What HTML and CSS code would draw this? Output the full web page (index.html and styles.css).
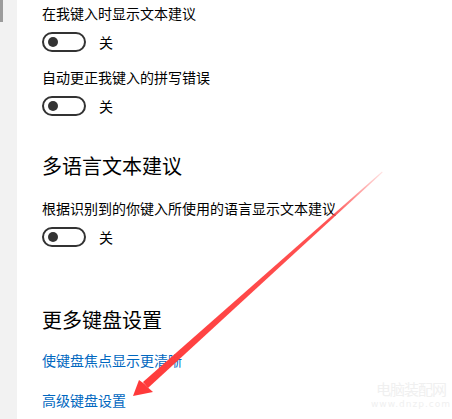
FILE: index.html
```
<html>
<head>
    <title>键盘设置</title>
    <meta http-equiv="content-type" content="text/html; charset=UTF-8">
    <link rel="stylesheet" href="styles.css">
</head>
<body>
    <div id="page">
        <div class="sidebar">
            <div class="thumb"></div>
        </div>

        <div id="content">
            <div class="setting first">
                <div class="label">在我键入时显示文本建议</div>
                <div class="switch-row">
                    <span class="toggle"><span class="knob"></span></span>
                    <span class="state">关</span>
                </div>
            </div>

            <div class="setting">
                <div class="label">自动更正我键入的拼写错误</div>
                <div class="switch-row">
                    <span class="toggle"><span class="knob"></span></span>
                    <span class="state">关</span>
                </div>
            </div>

            <h2 class="section">多语言文本建议</h2>
            <div class="setting tight">
                <div class="label">根据识别到的你键入所使用的语言显示文本建议</div>
                <div class="switch-row">
                    <span class="toggle"><span class="knob"></span></span>
                    <span class="state">关</span>
                </div>
            </div>

            <h2 class="section more">更多键盘设置</h2>
            <a class="link" href="#">使键盘焦点显示更清晰</a>
            <a class="link last" href="#">高级键盘设置</a>
        </div>

        <!-- red arrow drawn over the page -->
        <svg class="arrow" width="452" height="419" viewBox="0 0 452 419">
            <defs>
                <linearGradient id="fade" x1="382" y1="172" x2="133" y2="396" gradientUnits="userSpaceOnUse">
                    <stop offset="0" stop-color="#ff4040" stop-opacity="0.15"/>
                    <stop offset="0.2" stop-color="#ff4040" stop-opacity="0.9"/>
                    <stop offset="1" stop-color="#ff3a3a"/>
                </linearGradient>
            </defs>
            <polygon points="382,171.6 382.6,172.4 148,388 143,382" fill="url(#fade)"/>
            <polygon points="133,396 139,380 144.5,384 148.5,388 153,392" fill="#ff3a3a"/>
        </svg>

        <div class="watermark">
            <div class="wm-name">电脑装配网</div>
            <div class="wm-url">www.dnzp.com</div>
        </div>
    </div>
</body>
</html>
```

FILE: styles.css
```
body {
    margin: 0;
    background: #fff;
    font-family: "Noto Sans CJK SC", "Noto Sans", sans-serif;
    color: #000;
}

#page {
    position: relative;
    display: flex;
    width: 452px;
    height: 419px;
    overflow: hidden;
}

.sidebar {
    width: 17px;
    background: #f2f2f2;
    flex-shrink: 0;
}

.thumb {
    width: 3px;
    height: 22px;
    background: #9c9c9c;
}

#content {
    padding: 3px 0 0 25px;
}

.label {
    font-size: 14px;
    line-height: 20px;
}

.switch-row {
    display: flex;
    align-items: center;
    margin-top: 9px;
    height: 20px;
}

.setting {
    margin-top: 15px;
}

.setting.first {
    margin-top: 0;
}

.setting.tight {
    margin-top: 18px;
}

.toggle {
    box-sizing: border-box;
    width: 44px;
    height: 20px;
    border: 2px solid #333;
    border-radius: 10px;
    display: flex;
    align-items: center;
    padding-left: 4px;
}

.knob {
    width: 10px;
    height: 10px;
    border-radius: 50%;
    background: #333;
}

.state {
    margin-left: 13px;
    font-size: 14px;
}

.section {
    margin: 36px 0 0;
    font-size: 20px;
    font-weight: normal;
    line-height: 28px;
}

.section.more {
    margin-top: 59px;
}

.link {
    display: block;
    margin-top: 16px;
    font-size: 14px;
    line-height: 20px;
    color: #0067c0;
    text-decoration: none;
}

.link.last {
    margin-top: 20px;
}

.arrow {
    position: absolute;
    left: 0;
    top: 0;
}

.watermark {
    position: absolute;
    left: 371px;
    top: 379px;
    color: #f0f0f0;
    text-align: center;
}

.wm-name {
    font-size: 15px;
    line-height: 19px;
    letter-spacing: -1px;
}

.wm-url {
    font-family: "DejaVu Sans", sans-serif;
    font-size: 9px;
    line-height: 12px;
    letter-spacing: 1px;
}
```
